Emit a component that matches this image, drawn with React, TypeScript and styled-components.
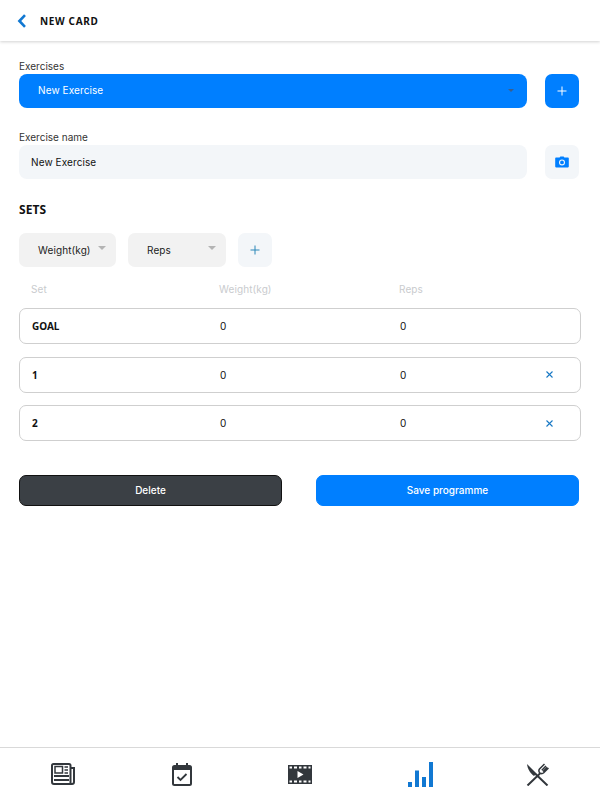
import React from 'react';
import styled, { createGlobalStyle } from 'styled-components';

const GlobalStyle = createGlobalStyle`
  html, body {
    margin: 0;
    padding: 0;
    background: #fff;
    font-family: 'Inter', 'Liberation Sans', sans-serif;
  }
  * { box-sizing: border-box; }
`;

const Page = styled.div`
  width: 600px;
  height: 800px;
  display: flex;
  flex-direction: column;
  overflow: hidden;
  background: #fff;
`;

const Header = styled.header`
  height: 41px;
  flex: none;
  display: flex;
  align-items: center;
  gap: 13px;
  padding-left: 17px;
  box-shadow: 0 1px 3px rgba(0, 0, 0, 0.18);
`;

const HeaderTitle = styled.h1`
  margin: 0;
  font: 700 10px 'Noto Sans', sans-serif;
  letter-spacing: 0.65px;
  color: #111;
`;

const Main = styled.main`
  flex: 1;
  padding: 19px 19px 0;
`;

const Label = styled.div`
  font-size: 10px;
  line-height: 10px;
  padding-top: 1px;
  height: 14px;
  color: #333;
`;

const FieldRow = styled.div<{ $gap?: number }>`
  display: flex;
  justify-content: space-between;
  margin-bottom: ${(p) => p.$gap ?? 0}px;
`;

const MainSelect = styled.div`
  width: 508px;
  height: 34px;
  display: flex;
  align-items: center;
  justify-content: space-between;
  padding: 0 13px 2px 19px;
  border-radius: 8px;
  background: #007fff;
  color: #fff;
  font-size: 10px;
  font-weight: 400;
  letter-spacing: 0.1px;
`;

const NameInput = styled.div`
  width: 508px;
  height: 34px;
  display: flex;
  align-items: center;
  padding-left: 12px;
  border-radius: 8px;
  background: #f3f6f9;
  color: #111;
  font-size: 10px;
  font-weight: 400;
  letter-spacing: 0.1px;
`;

const SquareButton = styled.button<{ $variant: 'primary' | 'soft'; $inset?: boolean }>`
  width: 34px;
  height: 34px;
  flex: none;
  margin-right: ${(p) => (p.$inset ? 2 : 0)}px;
  padding: 0;
  border: none;
  border-radius: 7px;
  display: flex;
  align-items: center;
  justify-content: center;
  background: ${(p) => (p.$variant === 'primary' ? '#007fff' : '#f3f6f9')};
`;

const Arrow = styled.span<{ $color: string; $size: number }>`
  width: 0;
  height: 0;
  border-left: ${(p) => p.$size}px solid transparent;
  border-right: ${(p) => p.$size}px solid transparent;
  border-top: ${(p) => p.$size}px solid ${(p) => p.$color};
`;

const SectionTitle = styled.h2`
  margin: 0 0 16px;
  padding-top: 1px;
  font: 700 12px/14px 'Noto Sans', sans-serif;
  letter-spacing: 0.1px;
  color: #111;
`;

const UnitRow = styled.div`
  display: flex;
  gap: 12px;
  margin-bottom: 16px;
`;

const UnitSelect = styled.div<{ $width: number; $pad: number }>`
  width: ${(p) => p.$width}px;
  height: 34px;
  display: flex;
  align-items: center;
  justify-content: space-between;
  padding: 0 10px 0 ${(p) => p.$pad}px;
  border-radius: 7px;
  background: #f2f2f2;
  color: #222;
  font-size: 10px;
  font-weight: 400;
  letter-spacing: 0.1px;

  ${Arrow} {
    margin-bottom: 5px;
  }
`;

const Columns = styled.div`
  display: grid;
  grid-template-columns: 188px 180px 1fr 34px;
  align-items: center;
`;

const TableHead = styled(Columns)`
  padding-left: 12px;
  width: 562px;
  height: 12px;
  margin-bottom: 13px;
  font-size: 10px;
  font-weight: 400;
  letter-spacing: 0.1px;
  color: #c9cbce;
`;

const SetRow = styled(Columns)`
  width: 562px;
  height: 36px;
  margin-bottom: 12.5px;
  padding-left: 12px;
  border: 1px solid #cfcfcf;
  border-radius: 7px;
  font-size: 10px;
  font-weight: 400;
  color: #111;
`;

const SetName = styled.span`
  font: 700 10px 'Noto Sans', sans-serif;
  color: #111;
`;

const ActionRow = styled.div`
  display: flex;
  justify-content: space-between;
  width: 560px;
  margin-top: 33.5px;
`;

const ActionButton = styled.button<{ $dark?: boolean }>`
  width: 263px;
  height: 31px;
  padding: 0;
  border-radius: 7px;
  border: 1px solid ${(p) => (p.$dark ? '#111' : '#007fff')};
  background: ${(p) => (p.$dark ? '#3b4045' : '#007fff')};
  color: #fff;
  font-family: inherit;
  font-size: 10px;
  font-weight: 500;
`;

const BottomNav = styled.nav`
  flex: none;
  height: 53px;
  border-top: 1px solid #d9d9d9;
  display: grid;
  grid-template-columns: repeat(5, 118.5px);
  padding: 0 0 0 4px;
  align-items: center;
  justify-items: center;
`;

const Plus = ({ color }: { color: string }) => (
  <svg width="10" height="10" viewBox="0 0 10 10" fill="none" stroke={color} strokeWidth="1">
    <path d="M5 0.500v9M0.500 5h9" />
  </svg>
);

const Close = () => (
  <svg width="7" height="7" viewBox="0 0 7 7" fill="none" stroke="#1878c4" strokeWidth="1.100">
    <path d="M0.500 0.500l6 6M6.500 0.500l-6 6" />
  </svg>
);

const Back = () => (
  <svg width="10" height="14" viewBox="0 0 10 14" fill="none" stroke="#1178d2" strokeWidth="2.600">
    <path d="M8 1.200L2.400 7 8 12.800" />
  </svg>
);

const Camera = () => (
  <svg width="14" height="12" viewBox="0 0 14 12">
    <path
      fill="#007fff"
      fillRule="evenodd"
      d="M4.600 1.400L5.400 0.400h3.200l.8 1H13a.8.8 0 0 1 .8.8V10.600a.8.8 0 0 1-.8.8H1a.8.8 0 0 1-.8-.8V2.200a.8.8 0 0 1 .8-.8zM7 3.400a3 3 0 1 0 0 6 3 3 0 0 0 0-6zM7 4.500a1.900 1.900 0 1 1 0 3.800 1.900 1.900 0 0 1 0-3.800z"
    />
  </svg>
);

const NewsIcon = () => (
  <svg width="24" height="22" viewBox="0 0 24 22" fill="none" stroke="#32373c" strokeWidth="2">
    <path d="M2.500 1H18a1.500 1.500 0 0 1 1.500 1.500V21H3a2 2 0 0 1-2-2V2.500A1.500 1.500 0 0 1 2.500 1z" />
    <path d="M19.500 5H23V19a2 2 0 0 1-2 2H17" />
    <path strokeWidth="1.500" d="M4 3.500H11.500V10H4z" />
    <path strokeWidth="1.500" d="M13.500 4H17M13.500 7H17M13.500 10H17" />
    <path d="M3 13H18M3 17H18" />
  </svg>
);

const CalendarIcon = () => (
  <svg width="20" height="23" viewBox="0 0 20 23" fill="none">
    <path fill="#32373c" d="M4 0h2v4H4zM14 0h2v4h-2z" />
    <rect x="1" y="3" width="18" height="19" rx="1.500" stroke="#32373c" strokeWidth="2" />
    <path fill="#32373c" d="M1 3h18v4H1z" />
    <path stroke="#32373c" strokeWidth="1.800" d="M5.500 14l3 3 6-6" />
  </svg>
);

const VideoIcon = () => (
  <svg width="24" height="19" viewBox="0 0 24 19">
    <path
      fill="#32373c"
      fillRule="evenodd"
      d="M0 0H24V19H0zM1.500 1.500V3.500H4V1.500zM6 1.500V3.500H9V1.500zM11 1.500V3.500H13.500V1.500zM15.500 1.500V3.500H18.500V1.500zM20.500 1.500V3.500H22.500V1.500zM1.500 15.500V17.500H4V15.500zM6 15.500V17.500H9V15.500zM11 15.500V17.500H13.500V15.500zM15.500 15.500V17.500H18.500V15.500zM20.500 15.500V17.500H22.500V15.500zM9.500 6V13L15.500 9.500z"
    />
  </svg>
);

const StatsIcon = () => (
  <svg width="28" height="25" viewBox="-3 0 28 25" fill="#1178d2">
    <rect x="0" y="20" width="4" height="5" />
    <rect x="7" y="8.500" width="4" height="16.500" />
    <rect x="14" y="15" width="4" height="10" />
    <rect x="21" y="0" width="4" height="25" />
  </svg>
);

const FoodIcon = () => (
  <svg width="23" height="23" viewBox="0 0 23 23" fill="none" stroke="#32373c">
    <path strokeWidth="2" d="M9 10.500L21.500 22.500M14.500 10L1.500 22.500" />
    <path fill="#32373c" stroke="none" d="M1 1L10.500 10.500 8 13C4.500 10.500 1.500 6 1 1z" />
    <path strokeWidth="1.500" d="M18.500 1l-5 5a3 3 0 0 0 0 3.500l.5.5a3 3 0 0 0 3.500 0l5-5M20 3l-4.200 4.200M21.200 4.200L17 8.500" />
  </svg>
);

const sets = ['1', '2'];

const App: React.FC = () => (
  <>
    <GlobalStyle />
    <Page>
      <Header>
        <Back />
        <HeaderTitle>NEW CARD</HeaderTitle>
      </Header>
      <Main>
        <Label>Exercises</Label>
        <FieldRow $gap={23}>
          <MainSelect>
            New Exercise
            <Arrow $color="#3a5f8f" $size={3} />
          </MainSelect>
          <SquareButton $variant="primary" $inset>
            <Plus color="#fff" />
          </SquareButton>
        </FieldRow>
        <Label>Exercise name</Label>
        <FieldRow $gap={23}>
          <NameInput>New Exercise</NameInput>
          <SquareButton $variant="soft" $inset>
            <Camera />
          </SquareButton>
        </FieldRow>
        <SectionTitle>SETS</SectionTitle>
        <UnitRow>
          <UnitSelect $width={97} $pad={19}>
            Weight(kg)
            <Arrow $color="#b4b4b4" $size={4} />
          </UnitSelect>
          <UnitSelect $width={98} $pad={19}>
            Reps
            <Arrow $color="#b4b4b4" $size={4} />
          </UnitSelect>
          <SquareButton $variant="soft">
            <Plus color="#2b87b8" />
          </SquareButton>
        </UnitRow>
        <TableHead>
          <span>Set</span>
          <span>Weight(kg)</span>
          <span>Reps</span>
        </TableHead>
        <SetRow>
          <SetName>GOAL</SetName>
          <span>0</span>
          <span>0</span>
        </SetRow>
        {sets.map((name) => (
          <SetRow key={name}>
            <SetName>{name}</SetName>
            <span>0</span>
            <span>0</span>
            <Close />
          </SetRow>
        ))}
        <ActionRow>
          <ActionButton $dark>Delete</ActionButton>
          <ActionButton>Save programme</ActionButton>
        </ActionRow>
      </Main>
      <BottomNav>
        <NewsIcon />
        <CalendarIcon />
        <VideoIcon />
        <StatsIcon />
        <FoodIcon />
      </BottomNav>
    </Page>
  </>
);

export default App;
